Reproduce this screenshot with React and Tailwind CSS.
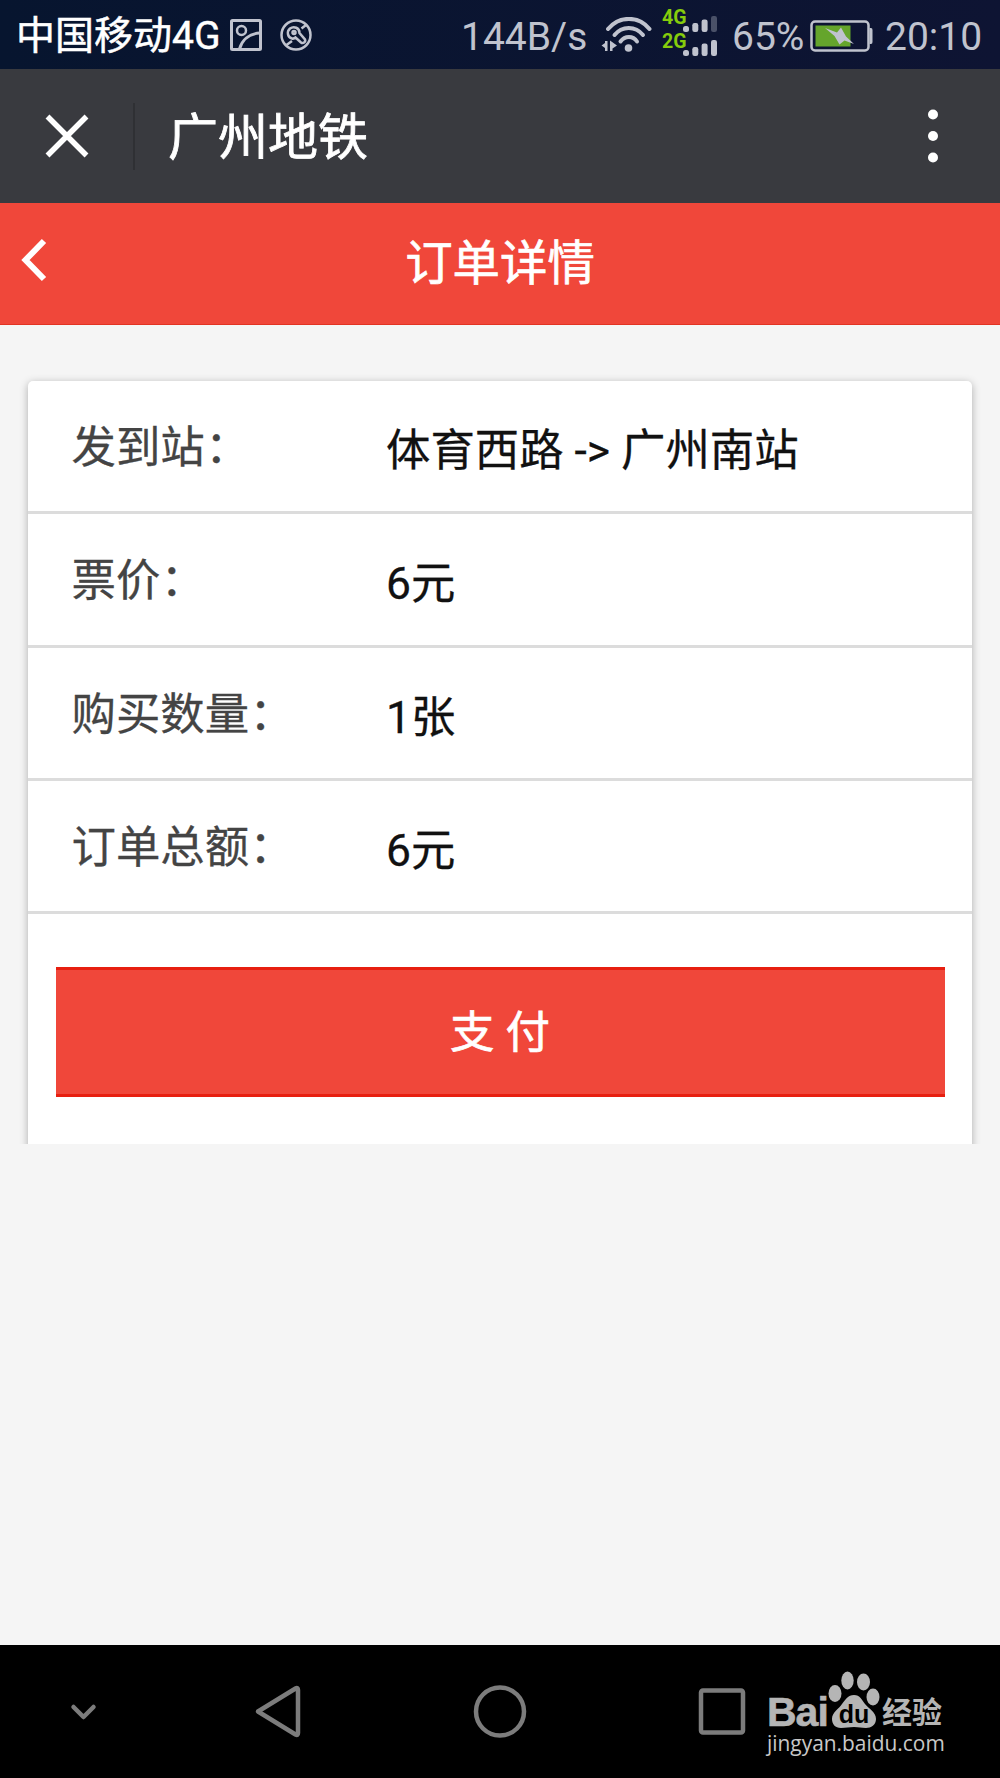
const rows = [
  { label: "发到站", value: "体育西路 -> 广州南站" },
  { label: "票价", value: "6元" },
  { label: "购买数量", value: "1张" },
  { label: "订单总额", value: "6元" },
];

const App = () => {
  return (
    <div className="flex h-[1778px] w-[1000px] flex-col overflow-hidden bg-[#f5f5f5] font-[Roboto,'Noto_Sans_CJK_SC',sans-serif]">
      <StatusBar />

      {/* WEBVIEW BAR */}
      <div className="flex h-[134px] items-center bg-[#393a3f] text-white">
        <svg className="ml-[44px] h-[46px] w-[46px]" viewBox="0 0 46 46" fill="none" stroke="#fff" strokeWidth="5.500">
          <path d="M3.500 3.500L42.500 42.500M42.500 3.500L3.500 42.500" />
        </svg>
        <div className="ml-[43px] h-[67px] w-[2px] bg-[#2f3034]"></div>
        <h1 className="ml-[33px] pt-[4px] text-[50px] leading-[60px] [-webkit-text-stroke:0.8px]">广州地铁</h1>
        <svg className="mr-[60px] ml-auto h-[54px] w-[14px]" viewBox="0 0 14 54" fill="#fff">
          <circle cx="7" cy="5.500" r="5" />
          <circle cx="7" cy="27" r="5" />
          <circle cx="7" cy="48.500" r="5" />
        </svg>
      </div>

      {/* PAGE HEADER */}
      <div className="grid h-[122px] grid-cols-[1fr_auto_1fr] items-center border-b border-[#e23423] bg-[#f0473a] text-white">
        <svg className="mb-[7px] ml-[21px] h-[44px] w-[26px]" viewBox="0 0 26 44" fill="none" stroke="#fff" strokeWidth="6">
          <path d="M23 3L4.500 22L23 41" />
        </svg>
        <h2 className="text-[47.4px] leading-[60px] [-webkit-text-stroke:0.7px]">订单详情</h2>
      </div>

      {/* ORDER */}
      <div className="h-[819px] overflow-hidden px-[28px] pt-[56px]">
        <div className="h-[800px] rounded-[5px] bg-white shadow-[0_2px_8px_rgba(0,0,0,0.3)]">
          {rows.map((row) => (
            <OrderRow key={row.label} label={row.label} value={row.value} />
          ))}
          <div className="px-[27.500px] pt-[52.500px]">
            <button className="h-[130px] w-full border-y-[3px] border-[#e71f10] bg-[#f0473a] pt-[4px] text-[44.4px] text-white [-webkit-text-stroke:0.7px]">
              支 付
            </button>
          </div>
        </div>
      </div>

      <NavBar />
    </div>
  );
};

export default App;

const OrderRow = ({ label, value }) => {
  return (
    <div className="flex h-[133.300px] border-b-[3px] border-[#dcdcdc] pl-[43.500px] text-[44.400px] leading-[60px]">
      <span className="w-[314.500px] pt-[37px] text-[#444] [-webkit-text-stroke:0.3px]">
        {label}
        <span className="ml-[0.500px]">：</span>
      </span>
      <span className="pt-[40px] text-[#111] [-webkit-text-stroke:0.3px]">{value}</span>
    </div>
  );
};

const StatusBar = () => {
  return (
    <div className="flex h-[69px] items-center bg-linear-to-r from-[#07152f] to-[#0e1433] text-[39px] leading-[60px] text-[#c0c3ce]">
      <span className="ml-[16px] w-[214px] pt-[2px] whitespace-nowrap text-white [-webkit-text-stroke:0.5px]">
        中国移动4G
      </span>

      {/* picture */}
      <svg className="h-[32px] w-[32px]" viewBox="0 0 32 32" fill="none" stroke="currentColor" strokeWidth="3">
        <rect x="1.500" y="1.500" width="29" height="29" rx="1" />
        <circle cx="11.500" cy="11.500" r="4.500" strokeWidth="2.500" />
        <path d="M9.500 30C12 21 19 14.500 30 14" />
      </svg>

      {/* wrench in a circle */}
      <svg className="ml-[18px] h-[32px] w-[32px]" viewBox="0 0 32 32" fill="none" stroke="currentColor" strokeWidth="2.500">
        <circle cx="16" cy="16" r="14.500" />
        <path d="M12 19.500C7.500 18.500 6.500 12.500 10 9.500C14 6.500 19.500 9 19.500 14L25 20.500C26 23 23 25 21 23.500L15.500 18.500Q14 20 12 19.500" />
        <circle cx="14" cy="13.500" r="1.500" />
        <path d="M21.500 9.500L26 6M12 22L6.500 26" />
      </svg>

      <span className="ml-[149px] w-[140px] pt-[4px]">144B/s</span>

      {/* wifi */}
      <svg className="h-[36px] w-[52px]" viewBox="0 0 52 36" fill="none" stroke="currentColor" strokeWidth="4" strokeLinecap="round">
        <path d="M7 12C18 -1.500 38 -1.500 48.500 12" />
        <path d="M13.500 18C21 8.500 34.500 8.500 42 18" />
        <path d="M19.500 24.500C24 18.500 32 18.500 36 24.500" />
        <circle cx="27.500" cy="31" r="3.800" fill="currentColor" stroke="none" />
        <path d="M6.500 24V34H4V31L0.500 28.500L4 26V24ZM9 23.500L16 28.500L11.500 31.500V34H9Z" fill="currentColor" stroke="none" />
      </svg>

      {/* sim cards */}
      <div className="mb-[6px] ml-[9px] flex flex-col">
        <Sim name="4G" weak />
        <Sim name="2G" />
      </div>

      <span className="ml-[15px] w-[78px] pt-[4px]">65%</span>

      {/* battery */}
      <svg className="mt-[2px] h-[32px] w-[63px]" viewBox="0 0 63 32">
        <rect x="1.500" y="1.500" width="57" height="29" rx="3.500" fill="none" stroke="#c0c3ce" strokeWidth="2.500" />
        <rect x="5.500" y="5.500" width="35" height="21" fill="#65a52c" />
        <path d="M59.500 8H61Q62.500 8 62.500 10V22Q62.500 24 61 24H59.500Z" fill="#c0c3ce" />
        <path d="M15 8L27 12.500L31 7.500L36 16.500L44 24L34.500 20.500L29.500 24.500L24.500 16Z" fill="#c0c3ce" />
      </svg>

      <span className="ml-[12px] pt-[4px]">20:10</span>
    </div>
  );
};

const Sim = ({ name, weak }) => {
  return (
    <div className="flex h-[24px] items-end">
      <span className="w-[21px] self-start text-[19.500px] leading-[20px] font-bold text-[#86cc0c]">{name}</span>
      <svg className="h-[17px] w-[34px]" viewBox="0 0 34 17" fill="currentColor">
        <rect x="0" y="11" width="6" height="6" rx="2.500" />
        <rect x="9.300" y="8" width="6" height="9" rx="2.200" />
        <rect x="18.600" y="4.500" width="6" height="12.500" rx="2.200" />
        <rect x="28" y="1" width="6" height="16" rx="2.200" opacity={weak ? 0.35 : 1} />
      </svg>
    </div>
  );
};

const NavBar = () => {
  return (
    <div className="relative mt-auto h-[133px] bg-black">
      <svg className="h-[133px] w-[1000px]" viewBox="0 0 1000 133" fill="none" stroke="#7c7c7c" strokeWidth="4.500" strokeLinecap="round" strokeLinejoin="round">
        <path d="M73.500 62L83.500 72L93.500 62" />
        <path d="M258 66.500L295.500 43.500Q298 42 298 45V88Q298 91 295.500 89.500Z" />
        <ellipse cx="500" cy="66.500" rx="24" ry="24" />
        <rect x="701" y="45.500" width="42" height="42" rx="2" />
      </svg>

      {/* WATERMARK */}
      <div className="absolute top-[22px] left-[767px] w-[190px] text-[#b5b5b5]">
        <div className="flex h-[62px] items-end">
          <span className="w-[60px] font-[Liberation_Sans] text-[41px] leading-[34px] font-bold tracking-[-1px] [-webkit-text-stroke:0.6px]">Bai</span>
          <Paw />
          <span className="ml-[1px] text-[30px] leading-[32px] font-bold">经验</span>
        </div>
        <p className="mt-[1px] font-['Open_Sans'] text-[20.900px] leading-[26px] text-[#c8c8c8]">jingyan.baidu.com</p>
      </div>
    </div>
  );
};

const Paw = () => {
  return (
    <svg className="h-[58px] w-[54px]" viewBox="0 0 54 58" fill="currentColor">
      <ellipse cx="8" cy="22.500" rx="6.500" ry="8.500" />
      <ellipse cx="20.500" cy="9.500" rx="6.200" ry="9" />
      <ellipse cx="36.500" cy="11" rx="6.500" ry="8.500" />
      <ellipse cx="46" cy="26" rx="6.500" ry="8.500" />
      <path d="M27 24C33 24 35 29 38 33C42 38 49 41 49 48C49 54 44 57 39 57C34 57 32 56 27 56C22 56 19 57 14 57C8 57 5 53 5 48C5 41 12 38 15 33C18 29 21 24 27 24Z" />
      <text x="27" y="52" textAnchor="middle" fill="#000" fontFamily="Liberation Sans" fontWeight="700" fontSize="25">
        du
      </text>
    </svg>
  );
};
